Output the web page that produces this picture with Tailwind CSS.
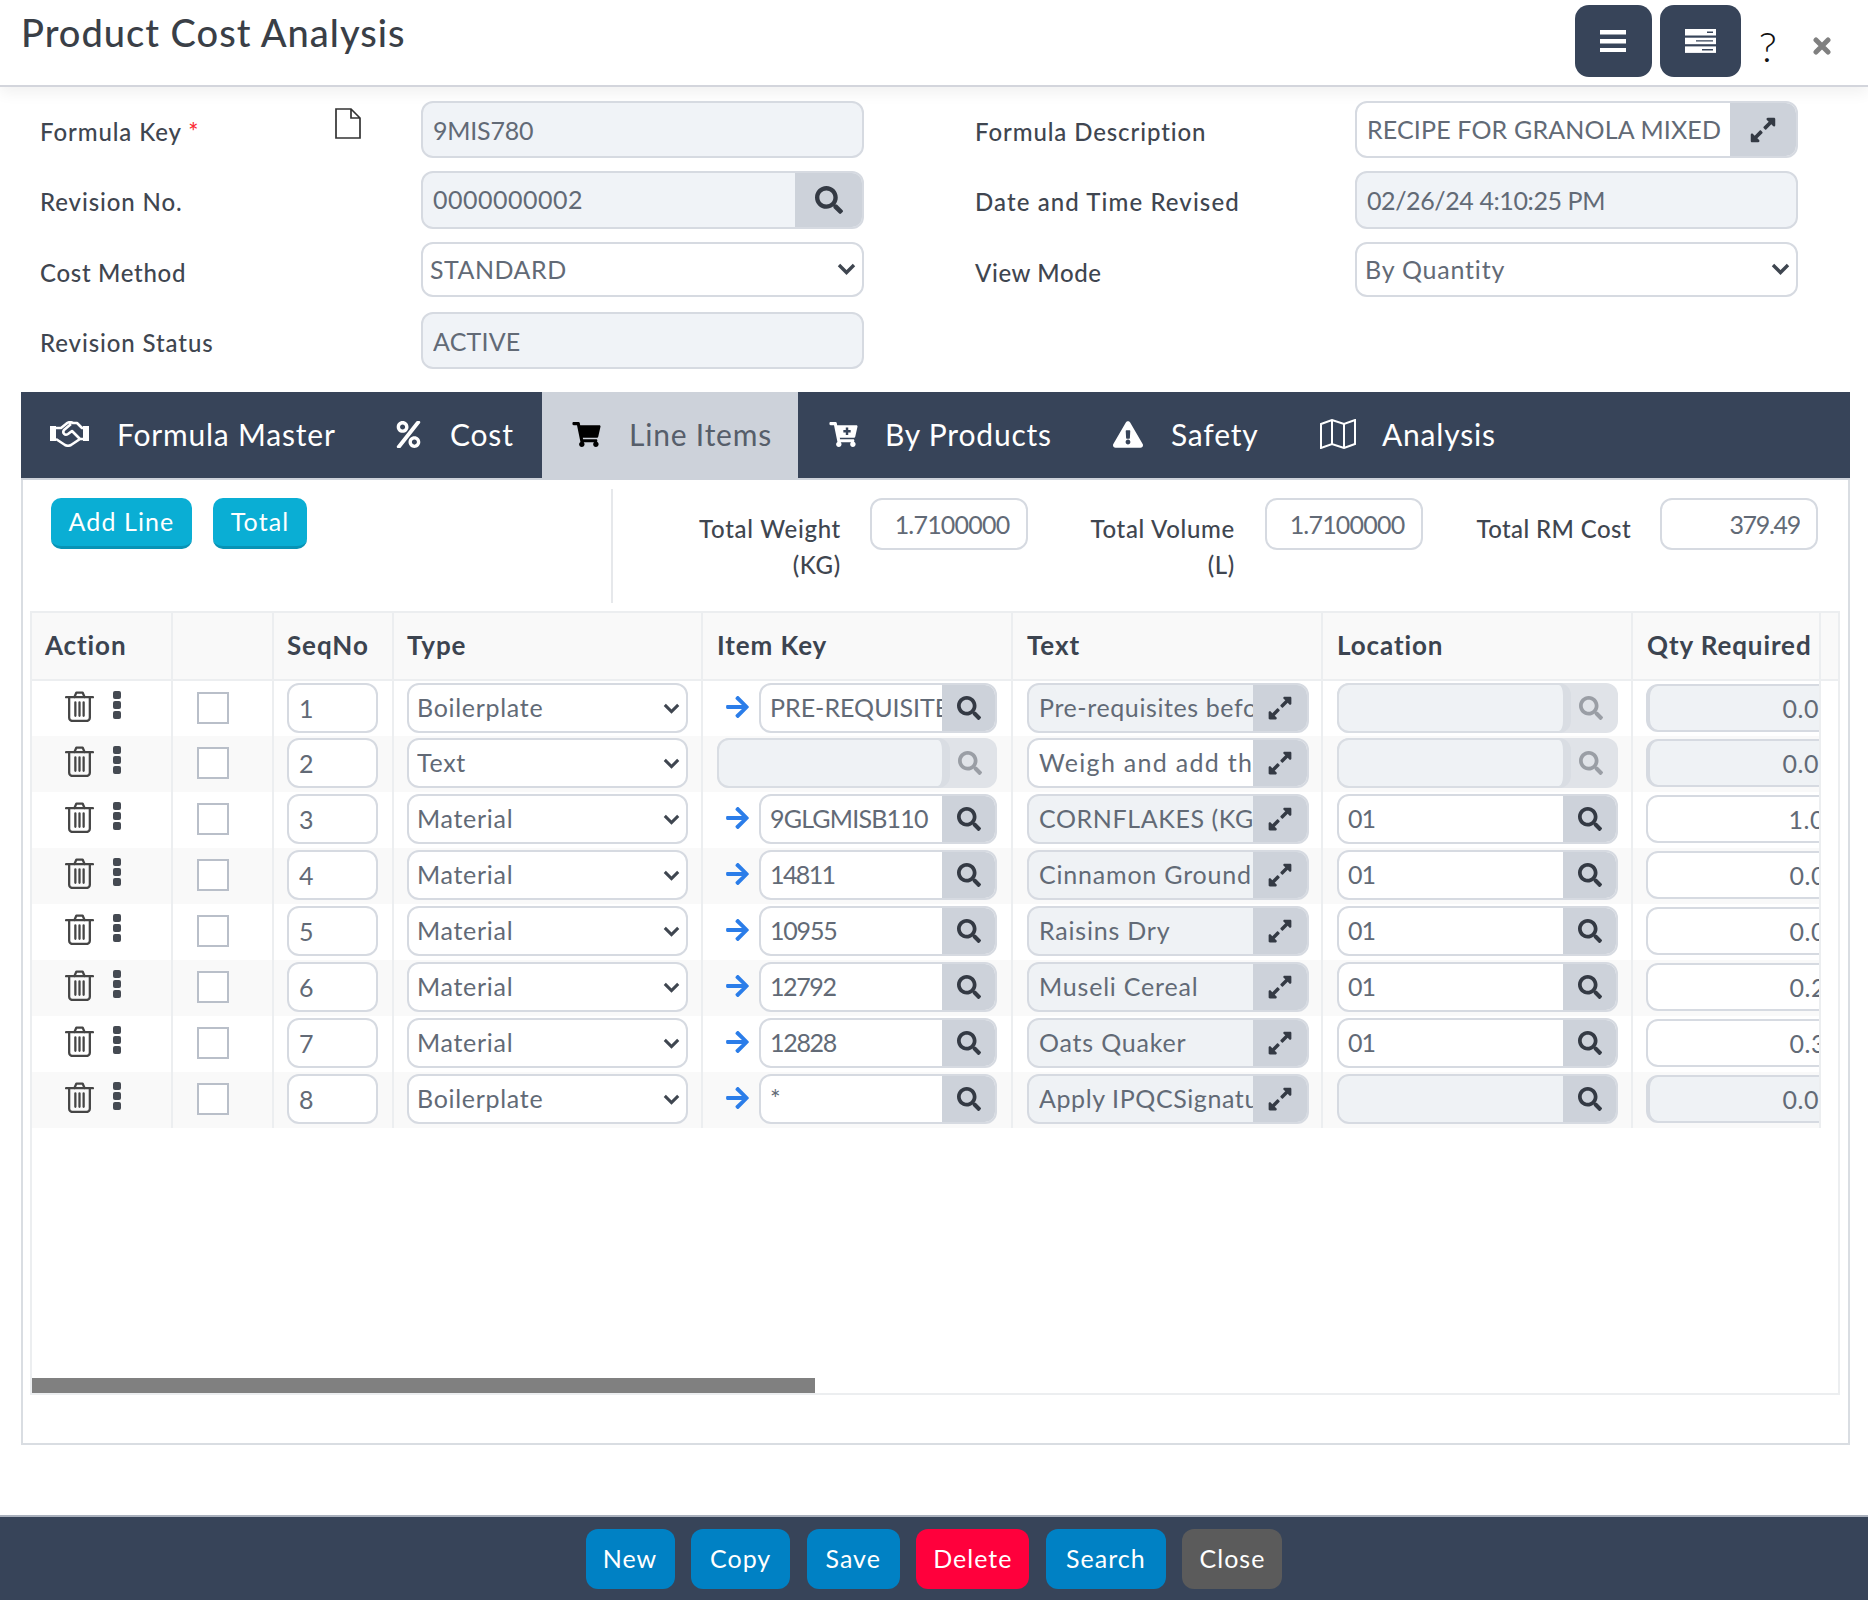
<!DOCTYPE html>
<html lang="en">
<head>
    <meta charset="UTF-8">
    <title>Product Cost Analysis</title>
    <script src="https://cdn.jsdelivr.net/npm/@tailwindcss/browser@4"></script>
</head>
<body class="bg-white font-[Lato,sans-serif] text-[25px] tracking-[0.5px] text-[#626a76]">
<div class="w-[1868px] h-[1600px] flex flex-col">

    <!-- Header -->
    <header class="h-[87px] shrink-0 border-b-2 border-[#d3d5dc] shadow-[0_6px_14px_rgba(0,0,0,0.06)] flex justify-between pl-[21px] pr-[37px]">
        <h1 class="text-[38px] leading-[64px] tracking-[1px] font-medium text-[#3a3f47]">Product Cost Analysis</h1>
        <div class="flex items-start pt-[5px]">
            <button class="w-[77px] h-[72px] rounded-[14px] bg-[#374459] flex items-center justify-center">
                <svg class="w-[26px] h-[22px]" viewBox="0 0 26 22" fill="#fff"><rect y="0" width="26" height="4.5"/><rect y="9" width="26" height="4.5"/><rect y="18" width="26" height="4.5"/></svg>
            </button>
            <button class="ml-[8px] w-[81px] h-[72px] rounded-[14px] bg-[#374459] flex items-center justify-center">
                <svg class="w-[31px] h-[24px]" viewBox="0 0 31 24" fill="#fff"><rect width="31" height="6.5"/><rect y="8.7" width="31" height="6.5"/><rect y="17.4" width="31" height="6.5"/><path d="M22 2.5h6v1.4h-6zM11 11.2h17v1.4H11zM17 20h11v1.4H17z" fill="#374459"/></svg>
            </button>
            <span class="ml-[18px] mt-[16px] text-[42px] leading-[50px] font-light text-[#111] tracking-normal">?</span>
            <svg class="ml-[36px] mt-[32px] w-[18px] h-[18px]" viewBox="0 0 18 18" stroke="#808080" stroke-width="5" stroke-linecap="round"><path d="M3 3l12 12M15 3L3 15"/></svg>
        </div>
    </header>

    <!-- Form fields -->
    <section class="shrink-0 h-[305px] pt-[14px] grid grid-cols-[935px_1fr] pl-[40px]">
        <div class="flex flex-col gap-[13px]">
            <div class="flex h-[57px]">
                <label class="w-[295px] pt-[13px] font-medium text-[24px] tracking-[0.9px] text-[#3f4650]">Formula Key <span class="text-red-500 text-[24px]">*</span></label>
                <svg class="w-[26px] h-[31px] mt-[7px]" viewBox="0 0 26 31" fill="none" stroke="#333" stroke-width="1.7"><path d="M1 1h15l9 9v20H1zM16 1v9h9"/></svg>
                <input readonly value="9MIS780" class="ml-[60px] w-[443px] h-[57px] rounded-[12px] border-2 border-[#d6dae1] bg-[#f0f3f7] pl-[10px] tracking-[-0.2px] outline-none">
            </div>
            <div class="flex h-[58px]">
                <label class="w-[381px] pt-[13px] font-medium text-[24px] tracking-[0.9px] text-[#3f4650]">Revision No.</label>
                <div class="w-[443px] h-[58px] flex rounded-[12px] overflow-hidden border-2 border-[#d6dae1] bg-[#f0f3f7]">
                    <input readonly value="0000000002" class="w-[372px] bg-transparent pl-[10px] outline-none">
                    <span class="flex-1 bg-[#cdd2da] flex items-center justify-center">
                        <svg class="w-[28px] h-[28px]" viewBox="0 0 512 512" fill="#343a44"><path d="M505 442.7L405.3 343c-4.5-4.5-10.6-7-17-7H372c27.6-35.3 44-79.7 44-128C416 93.1 322.9 0 208 0S0 93.1 0 208s93.1 208 208 208c48.3 0 92.7-16.4 128-44v16.3c0 6.4 2.5 12.5 7 17l99.7 99.7c9.4 9.4 24.6 9.4 33.9 0l28.3-28.3c9.4-9.4 9.4-24.6.1-34zM208 336c-70.7 0-128-57.2-128-128 0-70.7 57.2-128 128-128 70.7 0 128 57.2 128 128 0 70.7-57.2 128-128 128z"/></svg>
                    </span>
                </div>
            </div>
            <div class="flex h-[55px]">
                <label class="w-[381px] pt-[13px] font-medium text-[24px] tracking-[0.7px] text-[#3f4650]">Cost Method</label>
                <div class="relative w-[443px]">
                    <select class="appearance-none w-full h-[55px] rounded-[12px] border-2 border-[#d6dae1] bg-white pl-[7px] outline-none"><option>STANDARD</option></select>
                    <svg class="absolute right-[8px] top-[21px] w-[19px] h-[12px]" viewBox="0 0 19 12" fill="none" stroke="#3f4650" stroke-width="3.4"><path d="M2 2l7.5 7.5L17 2"/></svg>
                </div>
            </div>
            <div class="flex h-[57px] mt-[2px]">
                <label class="w-[381px] pt-[13px] font-medium text-[24px] tracking-[0.9px] text-[#3f4650]">Revision Status</label>
                <input readonly value="ACTIVE" class="w-[443px] h-[57px] rounded-[12px] border-2 border-[#d6dae1] bg-[#f0f3f7] pl-[10px] tracking-[0.2px] outline-none">
            </div>
        </div>
        <div class="flex flex-col gap-[13px]">
            <div class="flex h-[57px]">
                <label class="w-[380px] pt-[13px] font-medium text-[24px] tracking-[0.9px] text-[#3f4650]">Formula Description</label>
                <div class="w-[443px] h-[57px] flex rounded-[12px] overflow-hidden border-2 border-[#d6dae1] bg-white">
                    <input readonly value="RECIPE FOR GRANOLA MIXED" class="w-[373px] bg-transparent pl-[10px] tracking-[0.15px] outline-none">
                    <span class="flex-1 bg-[#cdd2da] flex items-center justify-center">
                        <svg class="w-[26px] h-[28px]" viewBox="0 0 448 512" fill="#343a44"><path d="M212.686 315.314L120 408l32.922 31.029c15.12 15.12 4.412 40.971-16.97 40.971h-112C10.697 480 0 469.255 0 456V344c0-21.382 25.803-32.09 40.922-16.971L72 360l92.686-92.686c6.248-6.248 16.379-6.248 22.627 0l25.373 25.373c6.249 6.248 6.249 16.378 0 22.627zm22.628-118.628L328 104l-32.922-31.029C279.958 57.851 290.666 32 312.048 32h112C437.303 32 448 42.745 448 56v112c0 21.382-25.803 32.09-40.922 16.971L376 152l-92.686 92.686c-6.248 6.248-16.379 6.248-22.627 0l-25.373-25.373c-6.249-6.248-6.249-16.378 0-22.627z"/></svg>
                    </span>
                </div>
            </div>
            <div class="flex h-[58px]">
                <label class="w-[380px] pt-[13px] font-medium text-[24px] tracking-[1.1px] text-[#3f4650]">Date and Time Revised</label>
                <input readonly value="02/26/24 4:10:25 PM" class="w-[443px] h-[58px] rounded-[12px] border-2 border-[#d6dae1] bg-[#f0f3f7] pl-[10px] tracking-[-0.4px] outline-none">
            </div>
            <div class="flex h-[55px]">
                <label class="w-[380px] pt-[13px] font-medium text-[24px] tracking-[0.6px] text-[#3f4650]">View Mode</label>
                <div class="relative w-[443px]">
                    <select class="appearance-none w-full h-[55px] rounded-[12px] border-2 border-[#d6dae1] bg-white pl-[8px] tracking-[0.8px] outline-none"><option>By Quantity</option></select>
                    <svg class="absolute right-[8px] top-[21px] w-[19px] h-[12px]" viewBox="0 0 19 12" fill="none" stroke="#3f4650" stroke-width="3.4"><path d="M2 2l7.5 7.5L17 2"/></svg>
                </div>
            </div>
        </div>
    </section>

    <!-- Tabs -->
    <nav class="shrink-0 ml-[21px] w-[1829px] h-[88px] bg-[#374459] border-b-2 border-[#cdd2da] flex text-[30px] tracking-[0.8px] text-white">
        <a class="w-[345px] pl-[29px] pb-[2px] flex items-center gap-[28px]">
            <svg class="w-[39px] h-[26px]" viewBox="0 0 39 26" fill="none" stroke="#fff" stroke-width="2.6" stroke-linejoin="round"><rect x="0" y="5" width="6" height="15" fill="#fff" stroke="none"/><rect x="33" y="5" width="6" height="15" fill="#fff" stroke="none"/><path d="M6 7h5l5-4c2-2 5-2 7-1l4 0 5 5h1M33 18h-3l-9 6c-2 1-4 1-6 0l-9-6M21 3l-7 6c-2 3 1 6 4 4l4-3 8 8"/></svg>
            <span>Formula Master</span>
        </a>
        <a class="w-[176px] pl-[30px] pb-[2px] flex items-center gap-[29px]">
            <svg class="w-[25px] h-[27px]" viewBox="0 0 448 512" fill="#fff"><path d="M112 224c61.9 0 112-50.1 112-112S173.9 0 112 0 0 50.1 0 112s50.1 112 112 112zm0-160c26.5 0 48 21.5 48 48s-21.5 48-48 48-48-21.5-48-48 21.5-48 48-48zm224 224c-61.9 0-112 50.1-112 112s50.1 112 112 112 112-50.1 112-112-50.1-112-112-112zm0 160c-26.5 0-48-21.5-48-48s21.5-48 48-48 48 21.5 48 48-21.5 48-48 48zM392.3.2l31.6.1c19.4.1 30.9 21.8 20 37.8L77.4 501.6a23.95 23.95 0 0 1-20 10.4l-31.6-.1C6.4 511.8-5.1 490.1 5.8 474.1L372.3 10.5c4.5-6.5 11.9-10.3 20-10.3z"/></svg>
            <span>Cost</span>
        </a>
        <a class="w-[256px] pl-[30px] pb-[2px] flex items-center gap-[28px] bg-[#cdd2da] text-[#565e6a]">
            <svg class="w-[29px] h-[25px]" viewBox="0 0 576 512" fill="#000"><path d="M528.12 301.319l47.273-208C578.806 78.301 567.391 64 551.99 64H159.208l-9.166-44.81C147.758 8.021 137.93 0 126.529 0H24C10.745 0 0 10.745 0 24v16c0 13.255 10.745 24 24 24h69.883l70.248 343.435C147.325 417.1 136 435.222 136 456c0 30.928 25.072 56 56 56s56-25.072 56-56c0-15.674-6.447-29.835-16.824-40h209.647C430.447 426.165 424 440.326 424 456c0 30.928 25.072 56 56 56s56-25.072 56-56c0-22.172-12.888-41.332-31.579-50.405l5.517-24.276c3.413-15.018-8.002-29.319-23.403-29.319H218.117l-6.545-32h293.145c11.206 0 20.92-7.754 23.403-18.681z"/></svg>
            <span>Line Items</span>
        </a>
        <a class="w-[285px] pl-[31px] pb-[2px] flex items-center gap-[27px]">
            <svg class="w-[29px] h-[25px]" viewBox="0 0 576 512" fill="#fff"><path d="M528.12 301.319l47.273-208C578.806 78.301 567.391 64 551.99 64H159.208l-9.166-44.81C147.758 8.021 137.93 0 126.529 0H24C10.745 0 0 10.745 0 24v16c0 13.255 10.745 24 24 24h69.883l70.248 343.435C147.325 417.1 136 435.222 136 456c0 30.928 25.072 56 56 56s56-25.072 56-56c0-15.674-6.447-29.835-16.824-40h209.647C430.447 426.165 424 440.326 424 456c0 30.928 25.072 56 56 56s56-25.072 56-56c0-22.172-12.888-41.332-31.579-50.405l5.517-24.276c3.413-15.018-8.002-29.319-23.403-29.319H218.117l-6.545-32h293.145c11.206 0 20.92-7.754 23.403-18.681z"/><path d="M335 115h50v50h50v50h-50v50h-50v-50h-50v-50h50z" fill="#374459"/></svg>
            <span>By Products</span>
        </a>
        <a class="w-[205px] pl-[30px] pb-[2px] flex items-center gap-[28px]">
            <svg class="w-[30px] h-[29px]" viewBox="0 0 576 512" fill="#fff"><path d="M569.517 440.013C587.975 472.007 564.806 512 527.94 512H48.054c-36.937 0-59.999-40.055-41.577-71.987L246.423 23.985c18.467-32.009 64.72-31.951 83.154 0l239.94 416.028zM288 354c-25.405 0-46 20.595-46 46s20.595 46 46 46 46-20.595 46-46-20.595-46-46-46zm-43.673-165.346l7.418 136c.347 6.364 5.609 11.346 11.982 11.346h48.546c6.373 0 11.635-4.982 11.982-11.346l7.418-136c.375-6.874-5.098-12.654-11.982-12.654h-63.383c-6.884 0-12.356 5.78-11.981 12.654z"/></svg>
            <span>Safety</span>
        </a>
        <a class="pl-[32px] pb-[2px] flex items-center gap-[26px]">
            <svg class="w-[36px] h-[30px]" viewBox="0 0 36 30" fill="none" stroke="#fff" stroke-width="2"><path d="M1 5l11-4 12 4 11-4v24l-11 4-12-4-11 4zM12 1v24M24 5v24"/></svg>
            <span>Analysis</span>
        </a>
    </nav>

    <!-- Line items panel -->
    <main class="shrink-0 ml-[21px] w-[1829px] h-[965px] border-x-2 border-b-2 border-[#d9dde2] pl-[7px] pr-[8px]">
        <div class="h-[131px] flex">
            <div class="w-[581px] flex items-start gap-[21px] pl-[21px] pt-[18px] tracking-[1.1px]">
                <button class="w-[141px] h-[51px] rounded-[10px] bg-[#0aaed4] border-b-[3px] border-[#0893b5] text-white">Add Line</button>
                <button class="w-[94px] h-[51px] rounded-[10px] bg-[#0aaed4] border-b-[3px] border-[#0893b5] text-white">Total</button>
            </div>
            <div class="w-[2px] h-[114px] mt-[9px] bg-[#e6e8eb]"></div>
            <div class="flex pt-[18px] text-[24px] font-medium tracking-[0.9px] text-[#3f4650]">
                <label class="w-[228px] pt-[13px] text-right leading-[36px] tracking-[0.7px]">Total Weight<br>(KG)</label>
                <input readonly value="1.7100000" class="ml-[29px] w-[158px] h-[52px] rounded-[12px] border-2 border-[#d6dae1] text-center pl-[6px] text-[25px] tracking-[-0.8px] font-normal text-[#626a76] outline-none">
                <label class="w-[207px] pt-[13px] text-right leading-[36px] tracking-[0.7px]">Total Volume<br>(L)</label>
                <input readonly value="1.7100000" class="ml-[30px] w-[158px] h-[52px] rounded-[12px] border-2 border-[#d6dae1] text-center pl-[6px] text-[25px] tracking-[-0.8px] font-normal text-[#626a76] outline-none">
                <label class="w-[208px] pt-[13px] text-right leading-[36px] tracking-[0.4px]">Total RM Cost</label>
                <input readonly value="379.49" class="ml-[29px] w-[158px] h-[52px] rounded-[12px] border-2 border-[#d6dae1] text-right pr-[16px] text-[25px] tracking-[-1.3px] font-normal text-[#626a76] outline-none">
            </div>
        </div>

        <div class="relative h-[784px] border-2 border-[#eceef0] overflow-hidden">
            <table class="table-fixed border-collapse w-[1806px]">
                <colgroup>
                    <col class="w-[140px]"><col class="w-[101px]"><col class="w-[120px]"><col class="w-[309px]"><col class="w-[310px]"><col class="w-[310px]"><col class="w-[310px]"><col class="w-[188px]"><col class="w-[18px]">
                </colgroup>
                <thead class="bg-[#f9f9f9] text-[26px] font-bold tracking-[0.9px] text-[#3c4450] text-left">
                    <tr class="h-[67px] border-b-2 border-[#eceef0]">
                        <th class="font-bold pl-[13px] pb-[2px] border-r-2 border-[#eceef0]">Action</th>
                        <th class="border-r-2 border-[#eceef0]"></th>
                        <th class="font-bold pl-[13px] pb-[2px] border-r-2 border-[#eceef0]">SeqNo</th>
                        <th class="font-bold pl-[13px] pb-[2px] border-r-2 border-[#eceef0]">Type</th>
                        <th class="font-bold pl-[14px] pb-[2px] border-r-2 border-[#eceef0]">Item Key</th>
                        <th class="font-bold pl-[14px] pb-[2px] border-r-2 border-[#eceef0]">Text</th>
                        <th class="font-bold pl-[14px] pb-[2px] border-r-2 border-[#eceef0]">Location</th>
                        <th class="font-bold pl-[14px] pb-[2px] border-r-2 border-[#eceef0]">Qty Required</th>
                        <th></th>
                    </tr>
                </thead>
                <tbody id="rows"></tbody>
            </table>
            <div class="absolute left-0 bottom-0 w-[783px] h-[15px] bg-[#808080]"></div>
        </div>
    </main>

    <div class="flex-1"></div>

    <!-- Footer actions -->
    <footer class="shrink-0 h-[85px] bg-[#374459] border-t-2 border-[#aab1bd] flex justify-center gap-[16.6px] pt-[12px] tracking-[1px] text-white">
        <button class="w-[89px] h-[60px] rounded-[12px] bg-[#0081c4]">New</button>
        <button class="w-[99px] h-[60px] rounded-[12px] bg-[#0081c4]">Copy</button>
        <button class="w-[93px] h-[60px] rounded-[12px] bg-[#0081c4]">Save</button>
        <button class="w-[113px] h-[60px] rounded-[12px] bg-[#ff003c]">Delete</button>
        <button class="w-[120px] h-[60px] rounded-[12px] bg-[#0081c4]">Search</button>
        <button class="w-[100px] h-[60px] rounded-[12px] bg-[#5b5b5b]">Close</button>
    </footer>
</div>

<script>
    const searchPath = 'M505 442.7L405.3 343c-4.5-4.5-10.6-7-17-7H372c27.6-35.3 44-79.7 44-128C416 93.1 322.9 0 208 0S0 93.1 0 208s93.1 208 208 208c48.3 0 92.7-16.4 128-44v16.3c0 6.4 2.5 12.5 7 17l99.7 99.7c9.4 9.4 24.6 9.4 33.9 0l28.3-28.3c9.4-9.4 9.4-24.6.1-34zM208 336c-70.7 0-128-57.2-128-128 0-70.7 57.2-128 128-128 70.7 0 128 57.2 128 128 0 70.7-57.2 128-128 128z';
    const expandPath = 'M212.686 315.314L120 408l32.922 31.029c15.12 15.12 4.412 40.971-16.97 40.971h-112C10.697 480 0 469.255 0 456V344c0-21.382 25.803-32.09 40.922-16.971L72 360l92.686-92.686c6.248-6.248 16.379-6.248 22.627 0l25.373 25.373c6.249 6.248 6.249 16.378 0 22.627zm22.628-118.628L328 104l-32.922-31.029C279.958 57.851 290.666 32 312.048 32h112C437.303 32 448 42.745 448 56v112c0 21.382-25.803 32.09-40.922 16.971L376 152l-92.686 92.686c-6.248 6.248-16.379 6.248-22.627 0l-25.373-25.373c-6.249-6.248-6.249-16.378 0-22.627z';
    const arrowPath = 'M190.5 66.9l22.2-22.2c9.4-9.4 24.6-9.4 33.9 0L441 239c9.4 9.4 9.4 24.6 0 33.9L246.6 467.3c-9.4 9.4-24.6 9.4-33.9 0l-22.2-22.2c-9.5-9.5-9.3-25 .4-34.3L311.4 296H24c-13.3 0-24-10.7-24-24v-32c0-13.3 10.7-24 24-24h287.4L190.9 101.2c-9.8-9.3-10-24.8-.4-34.3z';

    const lines = [
        { seq: 1, type: 'Boilerplate', key: 'PRE-REQUISITE', keyTrack: 'tracking-[0px]', text: 'Pre-requisites before', textTrack: 'tracking-[0.6px]', textOff: true, loc: '', locOff: true, qty: '0.00', qtyOff: true },
        { seq: 2, type: 'Text', key: '', keyOff: true, text: 'Weigh and add the', textTrack: 'tracking-[1.3px]', loc: '', locOff: true, qty: '0.00', qtyOff: true },
        { seq: 3, type: 'Material', key: '9GLGMISB110', keyTrack: 'tracking-[-0.8px]', text: 'CORNFLAKES (KG)', textTrack: 'tracking-[0.6px]', textOff: true, loc: '01', qty: '1.00', pr: 'pr-[14px]' },
        { seq: 4, type: 'Material', key: '14811', keyTrack: 'tracking-[-1.6px]', text: 'Cinnamon Ground', textTrack: 'tracking-[0.8px]', textOff: true, loc: '01', qty: '0.05', pr: 'pr-[13px]' },
        { seq: 5, type: 'Material', key: '10955', keyTrack: 'tracking-[-1.2px]', text: 'Raisins Dry', textTrack: 'tracking-[0.8px]', textOff: true, loc: '01', qty: '0.04', pr: 'pr-[13px]' },
        { seq: 6, type: 'Material', key: '12792', keyTrack: 'tracking-[-1.4px]', text: 'Museli Cereal', textTrack: 'tracking-[0.8px]', textOff: true, loc: '01', qty: '0.26', pr: 'pr-[13px]' },
        { seq: 7, type: 'Material', key: '12828', keyTrack: 'tracking-[-1.3px]', text: 'Oats Quaker', textTrack: 'tracking-[0.8px]', textOff: true, loc: '01', qty: '0.34', pr: 'pr-[13px]' },
        { seq: 8, type: 'Boilerplate', key: '*', keyTrack: 'tracking-[0.5px]', text: 'Apply IPQCSignature', textTrack: 'tracking-[0.6px]', textOff: true, loc: '', locGrey: true, qty: '0.00', qtyOff: true }
    ];

    function searchGroup(value, off, grey, width, track) {
        // disabled lookups have a grey field with a thick right edge and a faded button
        const icon = `<svg class="w-[24px] h-[24px]" viewBox="0 0 512 512" fill="${off ? '#9a9ea5' : '#343a44'}"><path d="${searchPath}"/></svg>`;
        if (off) {
            return `<div class="${width} h-[50px] flex rounded-[12px] bg-[#e0e3e8]">
                <input readonly value="${value}" class="relative min-w-0 flex-1 h-[50px] rounded-[12px] border-2 border-r-[8px] border-[#d9dde3] bg-[#eff2f5] pl-[9px] outline-none">
                <span class="w-[55px] -ml-[8px] flex items-center justify-center">${icon}</span></div>`;
        }
        return `<div class="${width} h-[50px] flex rounded-[12px] overflow-hidden border-2 border-[#d6dae1] ${grey ? 'bg-[#eff2f5]' : 'bg-white'}">
            <input readonly value="${value}" class="min-w-0 flex-1 bg-transparent pl-[9px] ${track} outline-none">
            <span class="w-[53px] bg-[#cdd2da] flex items-center justify-center">${icon}</span></div>`;
    }

    document.getElementById('rows').innerHTML = lines.map((l, i) => `
        <tr class="h-[56px] ${i % 2 ? 'bg-[#f9f9f9]' : 'bg-white'}">
            <td class="border-r-2 border-[#eceef0] align-top">
                <div class="flex pl-[33px] pt-[10px] gap-[19px]">
                    <svg class="w-[29px] h-[31px]" viewBox="0 0 28 30" fill="none" stroke="#454545" stroke-width="2.2" stroke-linecap="round" stroke-linejoin="round"><path d="M1 6h26M9 6l2-4.500h6L19 6M4 6v20a3 3 0 003 3h14a3 3 0 003-3V6M10 11v13M14 11v13M18 11v13"/></svg>
                    <svg class="w-[8px] h-[28px]" viewBox="0 0 8 28" fill="#454a52"><rect width="8" height="8" rx="2"/><rect y="10" width="8" height="8" rx="2"/><rect y="20" width="8" height="8" rx="2"/></svg>
                </div>
            </td>
            <td class="border-r-2 border-[#eceef0] align-top">
                <input type="checkbox" class="appearance-none block ml-[24px] mt-[11px] w-[32px] h-[32px] border-2 border-[#b9bfc9] bg-white">
            </td>
            <td class="border-r-2 border-[#eceef0] align-top pt-[2px] pl-[13px]">
                <input readonly value="${l.seq}" class="w-[91px] h-[50px] rounded-[12px] border-2 border-[#d6dae1] bg-white pl-[10px] outline-none">
            </td>
            <td class="border-r-2 border-[#eceef0] align-top pt-[2px] pl-[13px]">
                <div class="relative w-[281px]">
                    <select class="appearance-none w-full h-[50px] rounded-[12px] border-2 border-[#d6dae1] bg-white pl-[8px] tracking-[0.7px] outline-none"><option>${l.type}</option></select>
                    <svg class="absolute right-[8px] top-[20px] w-[17px] h-[11px]" viewBox="0 0 19 12" fill="none" stroke="#3f4650" stroke-width="3.4"><path d="M2 2l7.500 7.500L17 2"/></svg>
                </div>
            </td>
            <td class="border-r-2 border-[#eceef0] align-top pt-[2px] pl-[14px]">
                <div class="flex items-start">
                    ${l.keyOff ? '' : `<svg class="mt-[11px] ml-[9px] mr-[10px] w-[23px] h-[26px] shrink-0" viewBox="0 0 448 512" fill="#2b7de9"><path d="${arrowPath}"/></svg>`}
                    ${searchGroup(l.key, l.keyOff, false, l.keyOff ? 'w-[280px]' : 'w-[238px]', l.keyTrack)}
                </div>
            </td>
            <td class="border-r-2 border-[#eceef0] align-top pt-[2px] pl-[14px]">
                <div class="w-[282px] h-[50px] flex rounded-[12px] overflow-hidden border-2 border-[#d6dae1] ${l.textOff ? 'bg-[#eff2f5]' : 'bg-white'}">
                    <input readonly value="${l.text}" class="min-w-0 flex-1 bg-transparent pl-[10px] ${l.textTrack} outline-none">
                    <span class="w-[54px] bg-[#cdd2da] flex items-center justify-center"><svg class="w-[24px] h-[26px]" viewBox="0 0 448 512" fill="#343a44"><path d="${expandPath}"/></svg></span>
                </div>
            </td>
            <td class="border-r-2 border-[#eceef0] align-top pt-[2px] pl-[14px]">
                ${searchGroup(l.loc, l.locOff, l.locGrey, 'w-[281px]', 'tracking-[-1px]')}
            </td>
            <td class="border-r-2 border-[#eceef0] align-top pt-[3px] pl-[13px] overflow-hidden">
                <input readonly value="${l.qty}" class="w-[210px] h-[48px] rounded-[12px] border-2 ${l.qtyOff ? 'border-l-[4px] border-[#d6dae1] bg-[#eff2f5]' : 'border-[#d6dae1] bg-white'} text-right ${l.pr || 'pr-[20px]'} outline-none">
            </td>
            <td class="bg-white"></td>
        </tr>`).join('');
</script>
</body>
</html>
